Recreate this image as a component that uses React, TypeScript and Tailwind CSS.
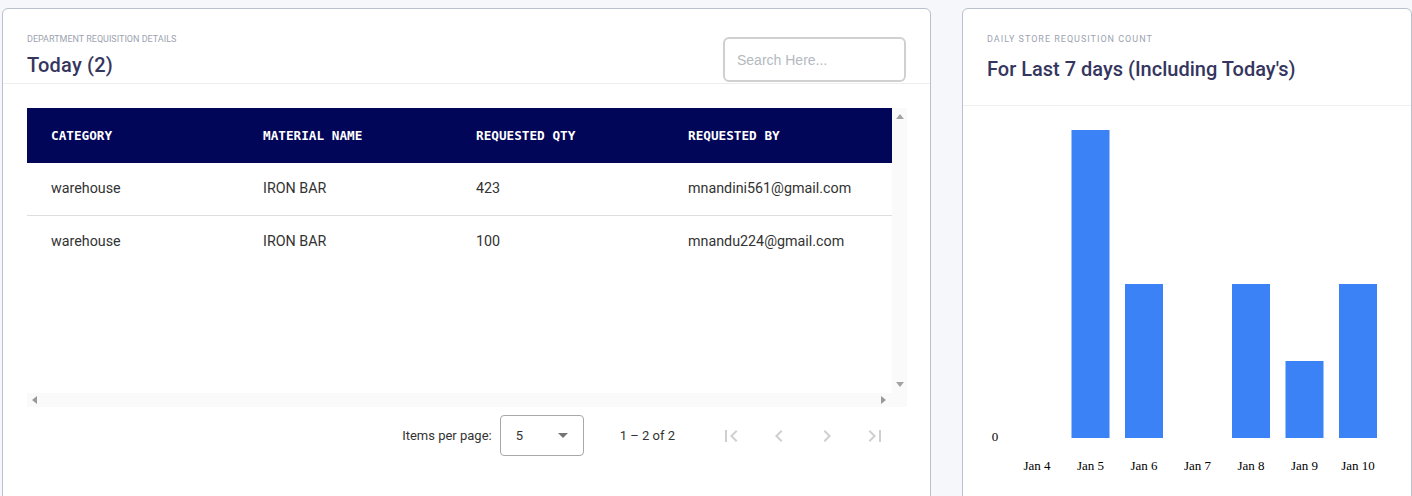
import React from "react";

const rows = [
  { category: "warehouse", material: "IRON BAR", qty: "423", by: "mnandini561@gmail.com" },
  { category: "warehouse", material: "IRON BAR", qty: "100", by: "mnandu224@gmail.com" },
];

const chart = [
  { label: "Jan 4", value: 0 },
  { label: "Jan 5", value: 4 },
  { label: "Jan 6", value: 2 },
  { label: "Jan 7", value: 0 },
  { label: "Jan 8", value: 2 },
  { label: "Jan 9", value: 1 },
  { label: "Jan 10", value: 2 },
];

export default function App() {
  return (
    <div className="w-[1412px] h-[496px] overflow-hidden bg-[#f5f7fa] flex gap-[31px] pl-[2px] pt-[8px] font-['Roboto',sans-serif]">
      {/* Requisition table card */}
      <div className="w-[929px] h-[520px] shrink-0 bg-white border border-[#b9c1cc] rounded-md">
        <div className="h-[75px] border-b border-[#eeeeee] flex justify-between items-start px-[24px]">
          <div className="pt-[25px]">
            <div className="text-[9px] leading-[11px] text-[#9ca3af] uppercase">Department Requisition Details</div>
            <div className="mt-[8px] text-[20px] leading-[24px] font-medium text-[#35365e] tracking-[0.2px]">Today (2)</div>
          </div>
          <div className="pt-[28px]">
            <input
              placeholder="Search Here..."
              className="w-[183px] h-[45px] border-2 border-[#d0d0d0] rounded-[6px] pl-[12px] text-[14px] font-['Liberation_Sans',sans-serif] placeholder:text-[#b4b9c0] outline-none"
            />
          </div>
        </div>

        {/* scroll box */}
        <div className="mt-[24px] ml-[24px] w-[880px]">
          <div className="flex h-[285px]">
            <div className="w-[865px]">
              <div className="grid grid-cols-[212px_213px_212px_1fr] h-[55px] items-center bg-[#020659] text-white font-['DejaVu_Sans_Mono',monospace] font-bold text-[12.7px]">
                <div className="pl-[24px]">CATEGORY</div>
                <div className="pl-[24px]">MATERIAL NAME</div>
                <div className="pl-[24px]">REQUESTED QTY</div>
                <div className="pl-[24px]">REQUESTED BY</div>
              </div>
              {rows.map((r, i) => (
                <div
                  key={i}
                  className={`grid grid-cols-[212px_213px_212px_1fr] items-center text-[14.3px] text-[#333333] ${i === 0 ? "h-[53px] border-b border-[#dedede]" : "h-[52px]"}`}
                >
                  <div className="pl-[24px]">{r.category}</div>
                  <div className="pl-[24px]">{r.material}</div>
                  <div className="pl-[24px]">{r.qty}</div>
                  <div className="pl-[24px]">{r.by}</div>
                </div>
              ))}
            </div>
            <div className="w-[15px] bg-[#fafafa] flex flex-col justify-between items-center py-[6px]">
              <svg width="8" height="5" viewBox="0 0 8 5"><path d="M0 5L4 0L8 5Z" fill="#a3a3a3" /></svg>
              <svg width="8" height="5" viewBox="0 0 8 5"><path d="M0 0L4 5L8 0Z" fill="#a3a3a3" /></svg>
            </div>
          </div>
          <div className="h-[14px] bg-[#fafafa] flex items-center justify-between pl-[5px] pr-[21px]">
            <svg width="5" height="8" viewBox="0 0 5 8"><path d="M5 0L0 4L5 8Z" fill="#999999" /></svg>
            <svg width="5" height="8" viewBox="0 0 5 8"><path d="M0 0L5 4L0 8Z" fill="#999999" /></svg>
          </div>
        </div>

        {/* paginator */}
        <div className="mt-[8px] flex justify-end items-center pr-[31px] text-[13px] text-[#333333]">
          <span>Items per page:</span>
          <div className="ml-[8px] w-[84px] h-[41px] border border-[#a8a8a8] rounded-[4px] flex items-center justify-between pl-[15px] pr-[15px] text-[13px]">
            <span>5</span>
            <svg width="10" height="5" viewBox="0 0 10 5"><path d="M0 0L5 5L10 0Z" fill="#757575" /></svg>
          </div>
          <span className="ml-[36px]">1 – 2 of 2</span>
          <div className="ml-[32px] flex">
            {[
              "M18.41 16.59L13.82 12l4.59-4.59L17 6l-6 6 6 6zM6 6h2v12H6z",
              "M15.41 7.41L14 6l-6 6 6 6 1.41-1.41L10.83 12z",
              "M10 6L8.59 7.41 13.17 12l-4.58 4.59L10 18l6-6z",
              "M5.59 7.41L10.18 12l-4.59 4.59L7 18l6-6-6-6zM16 6h2v12h-2z",
            ].map((d, i) => (
              <button key={i} className="w-[48px] h-[40px] flex items-center justify-center">
                <svg width="24" height="24" viewBox="0 0 24 24"><path d={d} fill="#cfcfcf" /></svg>
              </button>
            ))}
          </div>
        </div>
      </div>

      {/* Chart card */}
      <div className="w-[450px] h-[520px] shrink-0 bg-white border border-[#b9c1cc] rounded-md">
        <div className="h-[97px] border-b border-[#eeeeee] px-[24px] pt-[25px]">
          <div className="text-[9px] leading-[11px] tracking-[1px] text-[#9ca3af] uppercase">Daily Store Requsition Count</div>
          <div className="mt-[12px] text-[20px] leading-[24px] font-medium text-[#35365e]">For Last 7 days (Including Today's)</div>
        </div>
        <svg width="448" height="400" viewBox="0 0 448 400" className="block">
          <text x="32" y="335" fontFamily="Liberation Serif, serif" fontSize="13" fill="#000" textAnchor="middle">0</text>
          {chart.map((c, i) => {
            const cx = 74 + i * 53.5;
            const h = c.value * 77;
            return (
              <g key={c.label}>
                {h > 0 && <rect x={cx - 19} y={332 - h} width="38" height={h} fill="#3b82f6" />}
                <text x={cx} y="364" fontFamily="Liberation Serif, serif" fontSize="13" fill="#000" textAnchor="middle">{c.label}</text>
              </g>
            );
          })}
        </svg>
      </div>
    </div>
  );
}
